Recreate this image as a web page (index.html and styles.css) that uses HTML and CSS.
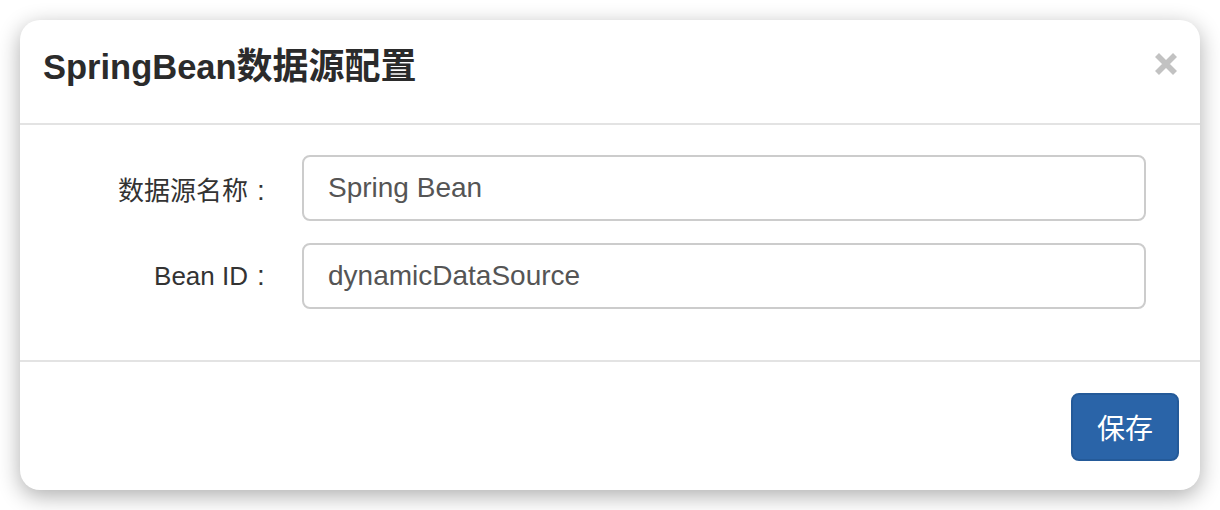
FILE: index.html
```html
<!DOCTYPE html>
<html lang="zh-CN">
<head>
<meta charset="utf-8">
<title>SpringBean数据源配置</title>
<link rel="stylesheet" href="styles.css">
</head>
<body>
<div class="page">
  <div class="modal">
    <div class="modal-header">
      <h4 class="modal-title">SpringBean<span class="cjk">数据源配置</span></h4>
      <button class="close" type="button" aria-label="Close">
        <svg width="22" height="22" viewBox="0 0 22 22"><path d="M2 2 L20 20 M20 2 L2 20" stroke="#c2c2c2" stroke-width="5.6" fill="none"/></svg>
      </button>
    </div>
    <div class="modal-body">
      <div class="form-row">
        <label class="form-label">数据源名称<span class="colon">:</span></label>
        <input class="form-control" type="text" value="Spring Bean">
      </div>
      <div class="form-row">
        <label class="form-label">Bean ID<span class="colon">:</span></label>
        <input class="form-control" type="text" value="dynamicDataSource">
      </div>
    </div>
    <div class="modal-footer">
      <button class="btn-primary" type="button">保存</button>
    </div>
  </div>
</div>
</body>
</html>
```

FILE: styles.css
```css
html, body {
  margin: 0;
  padding: 0;
  background: #ffffff;
}

body {
  font-family: "Liberation Sans", "Noto Sans CJK SC", sans-serif;
  color: #333333;
}

.page {
  padding: 20px;
}

.modal {
  width: 1180px;
  height: 470px;
  box-sizing: border-box;
  background: #ffffff;
  border-radius: 20px;
  box-shadow: 0 6px 22px rgba(0, 0, 0, 0.32);
  display: flex;
  flex-direction: column;
}

.modal-header {
  border-bottom: 2px solid #e3e3e3;
  display: flex;
  align-items: center;
  padding: 0 23px 10px 23px;
  box-sizing: content-box;
  height: 93px;
}

.modal-title {
  margin: 0;
  font-size: 34.5px;
  font-weight: bold;
  color: #2b2b2b;
  line-height: 1.2;
}

.modal-title .cjk {
  font-size: 36px;
}

.close {
  margin-left: auto;
  margin-bottom: 6px;
  padding: 0;
  border: 0;
  background: transparent;
  width: 22px;
  height: 22px;
  display: flex;
}

.modal-body {
  padding: 30px 54px 51px 0;
  display: flex;
  flex-direction: column;
  gap: 22px;
  border-bottom: 2px solid #e3e3e3;
}

.form-row {
  display: grid;
  grid-template-columns: 254px 1fr;
  column-gap: 28px;
  align-items: center;
}

.form-label {
  text-align: right;
  font-size: 26px;
  color: #333333;
}

.colon {
  display: inline-block;
  width: 26px;
  text-align: center;
  font-size: 28px;
  line-height: 1;
}

.form-control {
  height: 66px;
  box-sizing: border-box;
  border: 2px solid #cccccc;
  border-radius: 8px;
  padding: 0 24px;
  font-family: "Liberation Sans", sans-serif;
  font-size: 28px;
  color: #555555;
  background: #ffffff;
  outline: none;
  width: 100%;
}

.modal-footer {
  display: flex;
  justify-content: flex-end;
  padding: 31px 21px 0 0;
}

.btn-primary {
  width: 108px;
  height: 68px;
  border: 2px solid #245a99;
  border-radius: 8px;
  background: #2a64a8;
  color: #ffffff;
  font-family: "Noto Sans CJK SC", sans-serif;
  font-size: 28px;
  padding: 0;
}
```
